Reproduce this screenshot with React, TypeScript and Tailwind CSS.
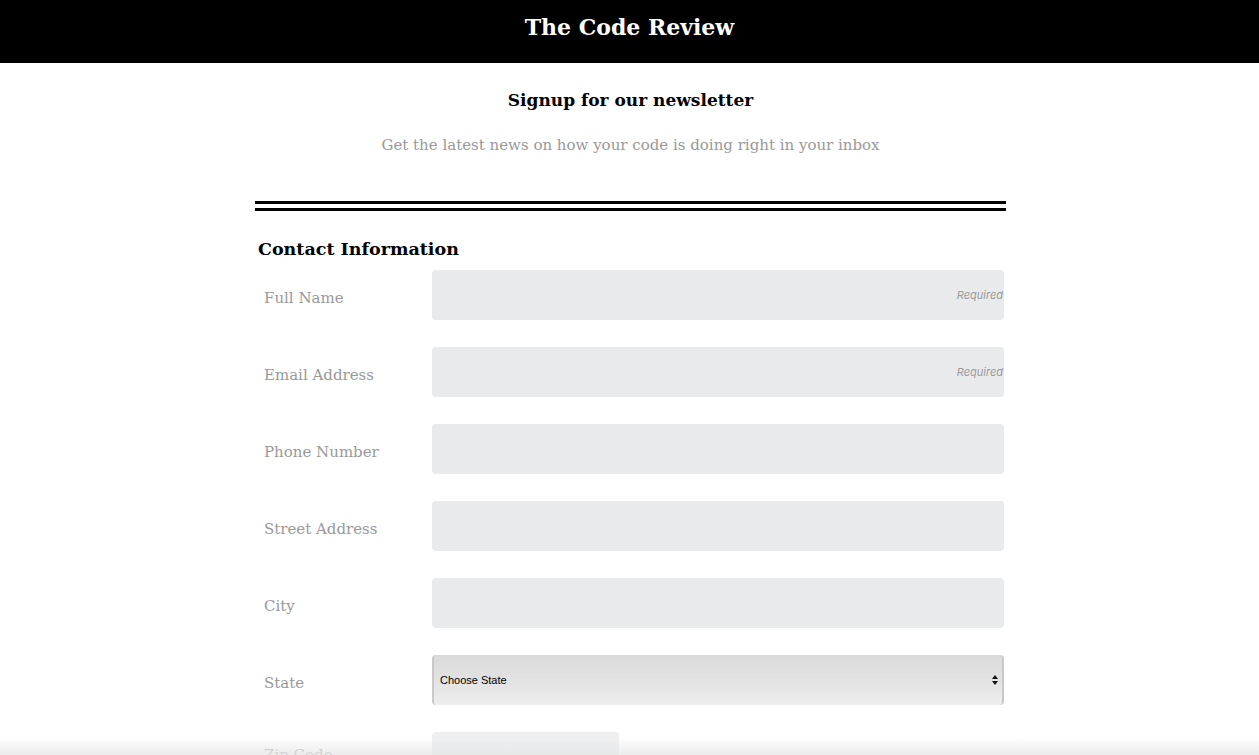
import React from 'react'

const serif = { fontFamily: '"DejaVu Serif", "Liberation Serif", serif' }

const fields = [
  { label: 'Full Name', required: true },
  { label: 'Email Address', required: true },
  { label: 'Phone Number' },
  { label: 'Street Address' },
  { label: 'City' },
]

function TextRow({ label, required }: { label: string; required?: boolean }) {
  return (
    <div className="flex items-center h-[50px]">
      <label className="w-[177px] shrink-0 pl-[9px] pt-[7px] text-[15px] text-[#999]">{label}</label>
      <div className="relative flex-1 mr-[2px] h-full">
        <input className="w-full h-full rounded-[4px] bg-[#e9eaec] outline-none px-3" />
        {required && (
          <span
            className="absolute right-[1px] top-1/2 -translate-y-1/2 text-[11px] italic text-[#9a9a9a]"
            style={{ fontFamily: 'Inter, "Liberation Sans", sans-serif' }}
          >
            Required
          </span>
        )}
      </div>
    </div>
  )
}

export default function App() {
  return (
    <div className="min-h-screen bg-white" style={serif}>
      <header className="bg-black h-[63px] flex items-center justify-center pb-[8px]">
        <h1 className="text-white text-[22px] font-bold">The Code Review</h1>
      </header>

      <main className="w-[751px] mx-auto translate-x-[1px]">
        <div className="text-center pt-[25px]">
          <h2 className="text-[17px] font-bold text-black">Signup for our newsletter</h2>
          <p className="mt-[20px] text-[15px] text-[#999]">
            Get the latest news on how your code is doing right in your inbox
          </p>
        </div>

        <div className="mt-[45px] border-t-[10px] border-double border-black" />

        <section className="pt-[26px]">
          <h3 className="pl-[3px] text-[17.5px] font-bold text-black leading-[24px]">Contact Information</h3>

          <div className="mt-[9px] flex flex-col gap-[27px]">
            {fields.map((f) => (
              <TextRow key={f.label} label={f.label} required={f.required} />
            ))}

            <div className="flex items-center h-[50px]">
              <label className="w-[177px] shrink-0 pl-[9px] pt-[7px] text-[15px] text-[#999]">State</label>
              <div className="relative flex-1 mr-[2px] h-full">
                <select
                  className="appearance-none w-full h-full rounded-[4px] border-x-2 border-[#c9c9c9] bg-gradient-to-b from-[#dadada] via-[#e2e2e2] to-[#eeeeee] pl-[6px] text-[11px] text-black outline-none"
                  style={{ fontFamily: '"Liberation Sans", Arial, sans-serif' }}
                  defaultValue=""
                >
                  <option value="">Choose State</option>
                </select>
                <svg
                  className="absolute right-[6px] top-1/2 -translate-y-1/2"
                  width="6"
                  height="10"
                  viewBox="0 0 6 10"
                >
                  <path d="M3 0 L6 4 H0 Z" fill="#111" />
                  <path d="M3 10 L6 6 H0 Z" fill="#111" />
                </svg>
              </div>
            </div>

            <div className="flex items-start h-[50px]">
              <label className="w-[177px] shrink-0 pl-[9px] pt-[12px] text-[15px] text-[#999]">Zip Code</label>
              <input className="w-[187px] h-full rounded-[4px] bg-[#e9eaec] outline-none px-3" />
            </div>
          </div>
        </section>
      </main>

      <div className="fixed bottom-0 left-0 right-0 h-[36px] pointer-events-none bg-gradient-to-b from-white/0 via-white/30 to-[#e6e6e6]/80" />
    </div>
  )
}
